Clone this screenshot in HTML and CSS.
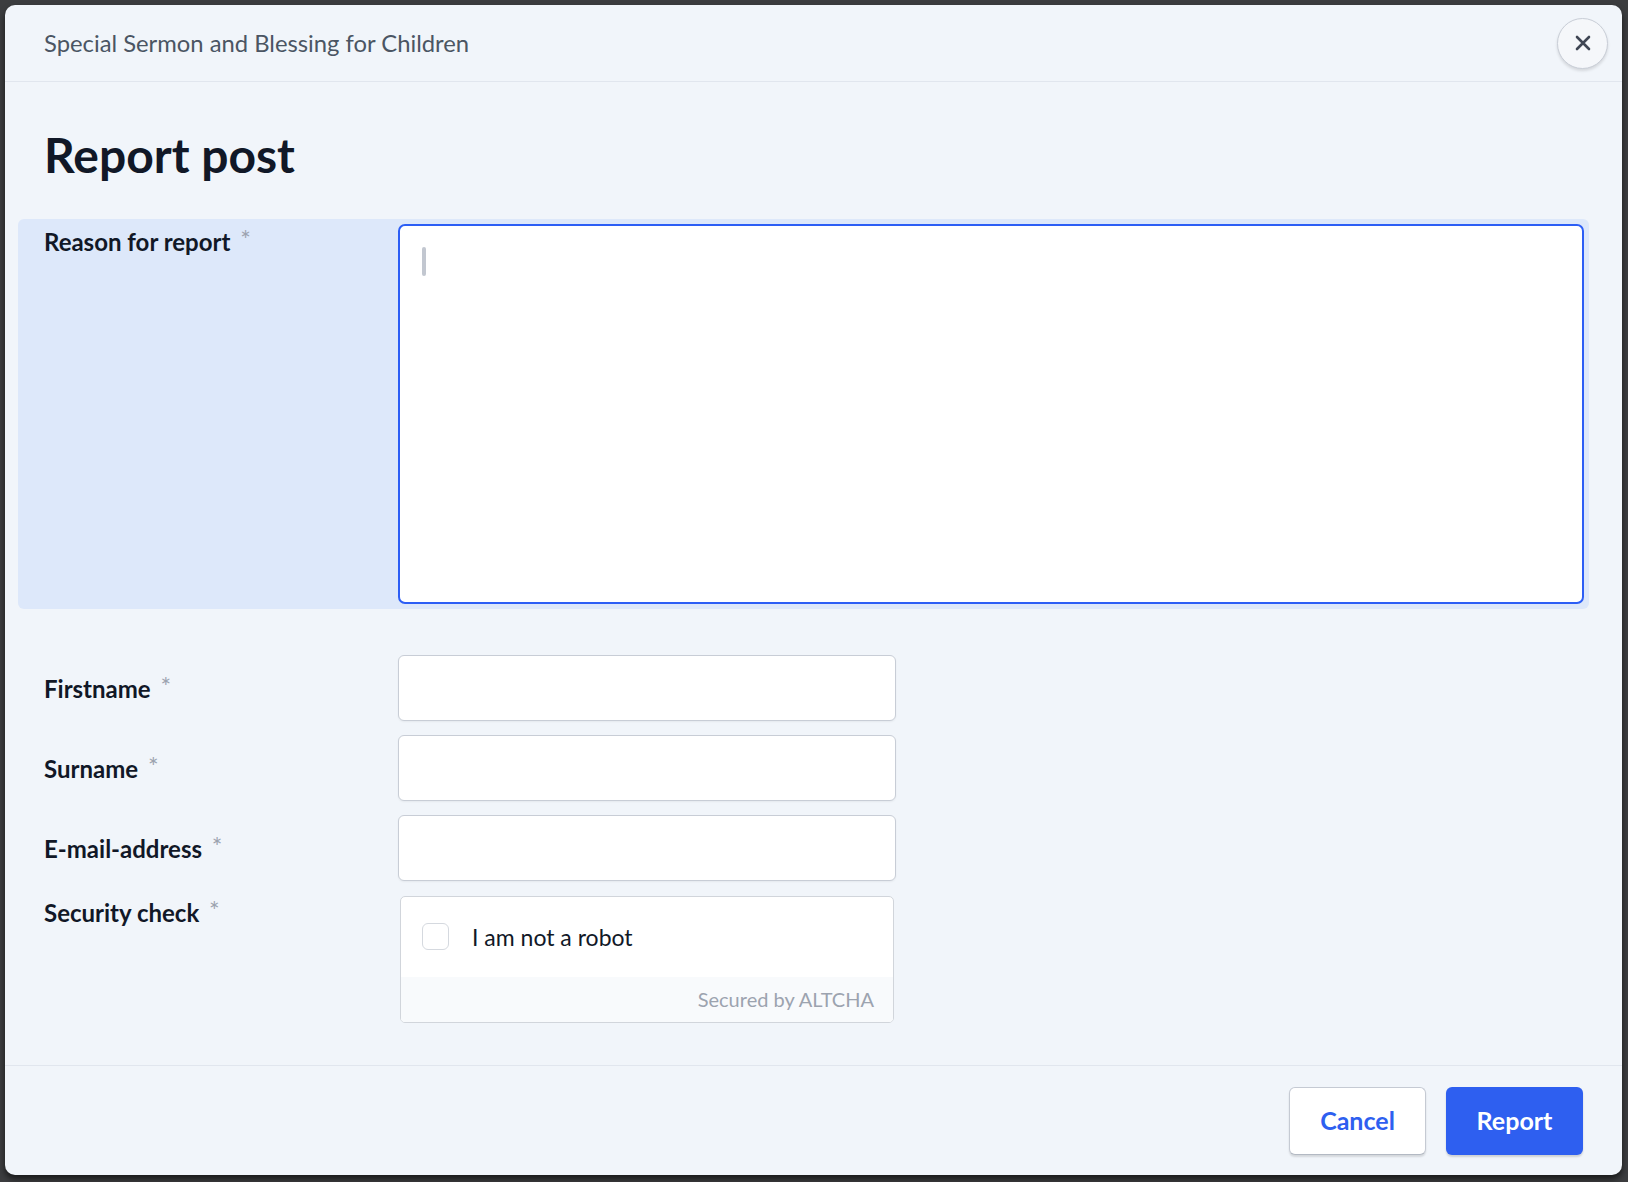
FILE: index.html
```html
<!DOCTYPE html>
<html lang="en">

<head>
    <meta charset="UTF-8">
    <meta name="viewport" content="width=device-width, initial-scale=1.0">
    <title>Report post</title>
    <link rel="stylesheet" href="styles.css">
</head>

<body>

    <div class="dialog">

        <div class="dialog-header">
            <span class="dialog-title">Special Sermon and Blessing for Children</span>
            <button class="close-button" aria-label="Close">
                <svg width="18" height="18" viewBox="0 0 18 18">
                    <path d="M3 3 L15 15 M15 3 L3 15" stroke="#3f4654" stroke-width="2.6" stroke-linecap="round" fill="none" />
                </svg>
            </button>
        </div>

        <div class="dialog-body">
            <h1 class="page-title">Report post</h1>

            <form class="report-form">
                <div class="form-row form-row-active">
                    <label class="form-label" for="reason">Reason for report <span class="required">*</span></label>
                    <div class="textarea-wrap">
                        <textarea id="reason" class="form-textarea"></textarea>
                        <span class="caret"></span>
                    </div>
                </div>

                <div class="field-list">
                    <div class="form-row">
                        <label class="form-label" for="firstname">Firstname <span class="required">*</span></label>
                        <input type="text" id="firstname" class="form-input">
                    </div>
                    <div class="form-row">
                        <label class="form-label" for="surname">Surname <span class="required">*</span></label>
                        <input type="text" id="surname" class="form-input">
                    </div>
                    <div class="form-row">
                        <label class="form-label" for="email">E-mail-address <span class="required">*</span></label>
                        <input type="email" id="email" class="form-input">
                    </div>
                    <div class="form-row form-row-top">
                        <span class="form-label">Security check <span class="required">*</span></span>
                        <div class="altcha">
                            <div class="altcha-main">
                                <span class="altcha-checkbox"></span>
                                <span class="altcha-label">I am not a robot</span>
                            </div>
                            <div class="altcha-footer">Secured by ALTCHA</div>
                        </div>
                    </div>
                </div>
            </form>
        </div>

        <div class="dialog-footer">
            <button class="btn btn-secondary">Cancel</button>
            <button class="btn btn-primary">Report</button>
        </div>

    </div>

</body>

</html>
```

FILE: styles.css
```css
body {
    margin: 0;
    padding: 5px 6px 7px 5px;
    background-color: #3c3d3f;
    font-family: Lato, 'Noto Sans', sans-serif;
    color: #111827;
}

.dialog {
    height: 1170px;
    display: flex;
    flex-direction: column;
    background-color: #f1f5fa;
    border-radius: 10px;
    box-shadow: 0 4px 6px rgba(0, 0, 0, 0.6);
    overflow: hidden;
}

/* header */

.dialog-header {
    height: 76px;
    display: flex;
    align-items: center;
    justify-content: space-between;
    padding: 0 14px 0 39px;
    border-bottom: 1px solid #e1e6ee;
}

.dialog-title {
    font-size: 23.8px;
    color: #4b5563;
}

.close-button {
    width: 51px;
    height: 51px;
    border-radius: 50%;
    border: 1.5px solid #c9ced7;
    background-color: #f5f7fa;
    box-shadow: 0 2px 3px rgba(0, 0, 0, 0.12);
    display: flex;
    align-items: center;
    justify-content: center;
    padding: 0;
    cursor: pointer;
}

/* body */

.dialog-body {
    flex: 1;
    padding: 0 38px 0 39px;
}

.page-title {
    font-size: 48px;
    font-weight: 700;
    line-height: 1.2;
    margin: 44px 0 35px;
    color: #111827;
}

.form-row {
    display: grid;
    grid-template-columns: 354px 1fr;
    align-items: center;
}

.form-row-top {
    align-items: start;
}

.form-row-active {
    align-items: start;
    background-color: #dde8fa;
    border-radius: 6px;
    margin: 0 -5px 0 -26px;
    padding: 5px 5px 5px 26px;
}

.form-label {
    font-size: 24px;
    font-weight: 700;
    line-height: 28px;
    color: #111827;
}

.form-row-active .form-label {
    padding-top: 1px;
}

.form-row-top .form-label {
    padding-top: 0;
}

.required {
    color: #9ca3af;
    font-size: 25px;
    font-weight: 400;
    vertical-align: 2px;
    margin-left: 4px;
}

.textarea-wrap {
    position: relative;
}

.form-textarea {
    display: block;
    width: 100%;
    height: 380px;
    box-sizing: border-box;
    border: 2px solid #2c5ef5;
    border-radius: 7px;
    background-color: #fff;
    resize: none;
    outline: none;
}

.caret {
    position: absolute;
    left: 24px;
    top: 23px;
    width: 4px;
    height: 29px;
    border-radius: 2px;
    background-color: #c2c7d0;
}

.field-list {
    margin-top: 46px;
    display: flex;
    flex-direction: column;
    gap: 14px;
}

.form-input {
    width: 498px;
    height: 66px;
    box-sizing: border-box;
    border: 1.5px solid #c8cdd6;
    border-radius: 6px;
    background-color: #fff;
    box-shadow: 0 1px 2px rgba(0, 0, 0, 0.05);
    outline: none;
}

.field-list .form-row-top {
    margin-top: 1px;
}

/* altcha widget */

.altcha {
    width: 494px;
    margin-left: 2px;
    box-sizing: border-box;
    border: 1.5px solid #d1d5db;
    border-radius: 5px;
    background-color: #fff;
    overflow: hidden;
}

.altcha-main {
    height: 80px;
    display: flex;
    align-items: center;
    padding-left: 21px;
}

.altcha-checkbox {
    width: 27px;
    height: 27px;
    box-sizing: border-box;
    border: 1.5px solid #d5d9df;
    border-radius: 6px;
    margin-right: 23px;
}

.altcha-label {
    font-size: 23px;
    color: #111827;
}

.altcha-footer {
    height: 45px;
    background-color: #f8fafc;
    text-align: right;
    padding-right: 19px;
    font-size: 20px;
    line-height: 44px;
    color: #9ca3af;
}

/* footer */

.dialog-footer {
    height: 109px;
    display: flex;
    align-items: center;
    justify-content: flex-end;
    gap: 20px;
    padding: 0 39px;
    border-top: 1px solid #e1e6ee;
}

.btn {
    height: 68px;
    width: 137px;
    padding-bottom: 3px;
    border-radius: 6px;
    font-family: Lato, 'Noto Sans', sans-serif;
    font-size: 25px;
    font-weight: 700;
    cursor: pointer;
}

.btn-secondary {
    background-color: #fff;
    color: #2e5ff0;
    border: 1.5px solid #c5cad3;
    border-bottom-color: #b3b9c3;
    box-shadow: 0 2px 2px rgba(0, 0, 0, 0.12);
}

.btn-primary {
    background-color: #2e5ff0;
    color: #fff;
    border: none;
    box-shadow: 0 2px 2px rgba(0, 0, 0, 0.15);
}
```
